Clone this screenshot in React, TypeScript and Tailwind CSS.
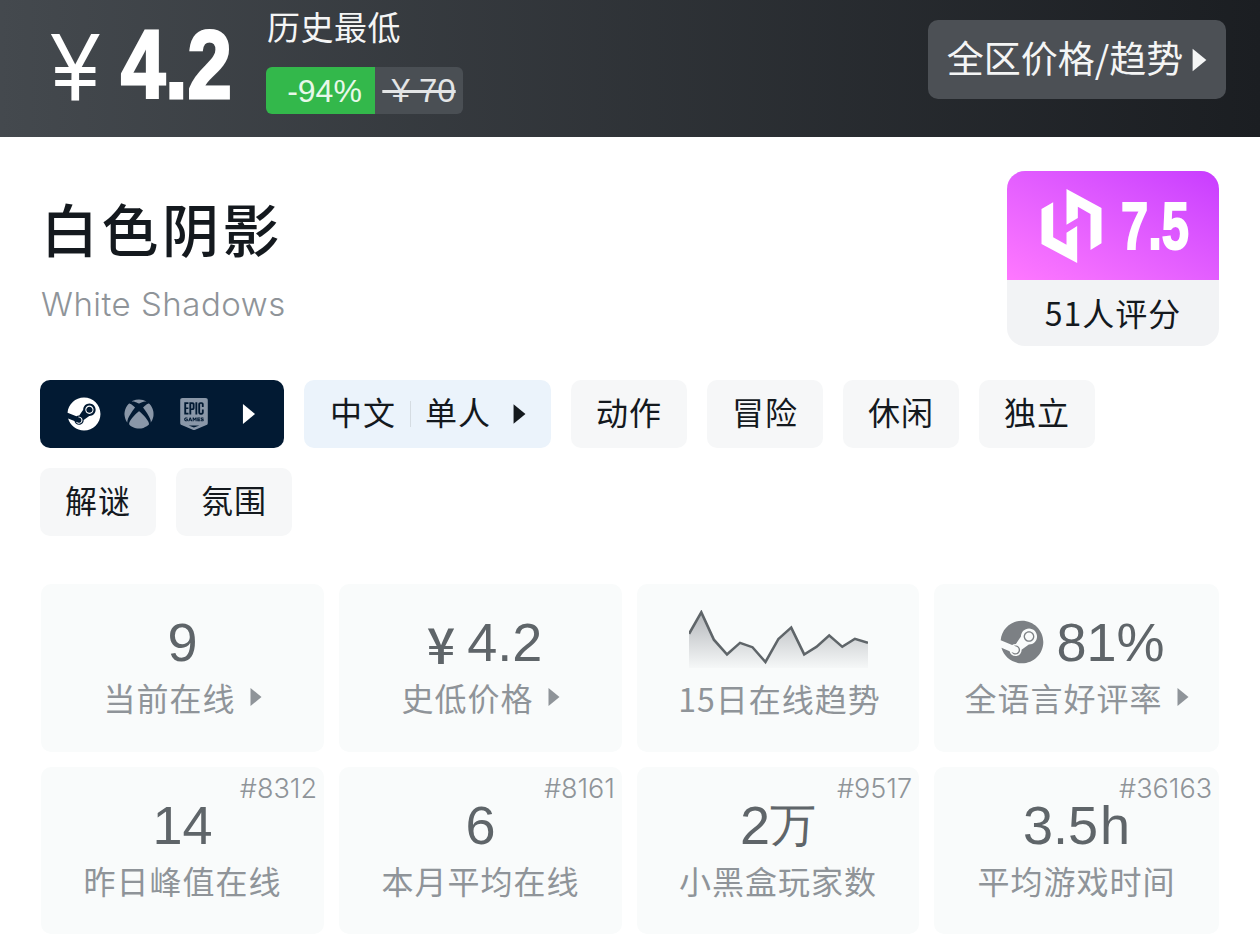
import { FaSteam, FaXbox } from 'react-icons/fa';
import { SiEpicgames } from 'react-icons/si';

const cjk = { fontFamily: '"Noto Sans CJK SC", sans-serif' };
const sparkPoints = '155,162 187,97 220,180 254,224 288,189 320,202 354,247 388,177 421,143 455,224 487,201 520,167 554,201 587,177 621,189';

function Arrow({ className }: { className: string }) {
  return (
    <svg viewBox="0 0 12 20" className={className} fill="currentColor">
      <path d="M0.5 1 L11.5 10 L0.5 19 Z" />
    </svg>
  );
}

function Tag({ text }: { text: string }) {
  return (
    <div className="flex h-[68px] w-[116px] items-center justify-center rounded-[10px] bg-[#f6f7f8] pb-[6px] text-[32px] tracking-[1px] text-[#14191e]">
      {text}
    </div>
  );
}

function StatCard({ value, label, rank, arrow }: { value?: React.ReactNode; label: string; rank?: string; arrow?: boolean }) {
  return (
    <div className="relative rounded-[10px] bg-[#f9fbfb] pt-[30px] text-center">
      {rank && (
        <div className="absolute right-[7px] top-[5px] font-['Inter'] text-[27px] font-light leading-[34px] text-[#8f9499]">{rank}</div>
      )}
      <div className="flex h-[56px] items-center justify-center font-['Liberation_Sans'] text-[54px] leading-[56px] text-[#5f6569]">{value}</div>
      <div className="mt-[7px] flex h-[40px] items-center justify-center text-[32px] leading-[40px] tracking-[1px] text-[#8f9499]">
        {label}
        {arrow && <Arrow className="ml-[14px] h-[22px] w-[12px]" />}
      </div>
    </div>
  );
}

export default function App() {
  return (
    <div className="h-[952px] w-[1260px] overflow-hidden bg-white" style={cjk}>
      {/* Price bar */}
      <div className="flex h-[137px] items-start bg-gradient-to-r from-[#44494e] to-[#1b1e22] pl-[50px] pr-[34px] text-white">
        <div className="flex h-[129px] w-[216px] items-center">
          <span className="ml-[1px] mt-[4px] inline-block w-[54px] origin-left scale-x-[0.9] font-['Liberation_Sans'] text-[97px] leading-none">¥</span>
          <span className="ml-[16px] inline-block origin-left scale-x-[0.83] font-['Liberation_Sans'] text-[96px] font-bold leading-none [-webkit-text-stroke:3px_white]">4.2</span>
        </div>
        <div className="flex flex-col items-start pt-[4px]">
          <div className="h-[44px] pl-[1px] text-[33px] leading-[44px] tracking-[0.5px] text-[#f4f5f5]">历史最低</div>
          <div className="mt-[19px] flex h-[47px] overflow-hidden rounded-[6px]">
            <div className="flex w-[109px] items-center justify-center bg-[#33b84b] pl-[8px] font-['Liberation_Sans'] text-[32px] text-[#e8f8ea]">-94%</div>
            <div className="flex w-[88px] items-center justify-center bg-[#4a4f54] font-['Liberation_Sans'] text-[33px] text-[#e3e5e6] line-through">&nbsp;¥ 70</div>
          </div>
        </div>
        <div className="ml-auto mt-[20px] flex h-[79px] w-[298px] items-center justify-center rounded-[10px] bg-[#4c5055] pb-[4px] text-[37px] text-[#f4f5f5]">
          全区价格/趋势
          <Arrow className="ml-[9px] mt-[4px] h-[28px] w-[15px]" />
        </div>
      </div>

      <div className="pl-[40px] pr-[41px] pt-[34px]">
        {/* Title and score */}
        <div className="flex items-start justify-between">
          <div className="pt-[16px]">
            <div className="pl-[1px] text-[57px] font-medium leading-[80px] tracking-[3.5px] text-[#14191e]">白色阴影</div>
            <div className="mt-[15px] pl-[1px] font-['Inter'] text-[33px] font-light leading-[44px] tracking-[0.5px] text-[#8f9499]">White Shadows</div>
          </div>
          <div className="h-[175px] w-[212px] overflow-hidden rounded-[18px] bg-[#f2f3f5]">
            <div className="flex h-[109px] items-center bg-gradient-to-tr from-[#ff78ff] to-[#c83cff] pl-[34px]">
              <svg viewBox="183 85 180 222" className="h-[74px] w-[61px]" fill="#fff">
                <path d="M258 85 L363 142 L363 248 L330 268 L330 160 L292 138 L292 172 L258 192 Z" />
                <path d="M290 307 L183 250 L183 145 L218 125 L218 230 L258 252 L258 216 L290 196 Z" />
              </svg>
              <span className="ml-[19px] inline-block origin-left scale-x-[0.74] font-['Liberation_Sans'] text-[66px] font-bold leading-none text-white [-webkit-text-stroke:2px_white]">7.5</span>
            </div>
            <div className="flex h-[66px] items-center justify-center pb-[2px] text-[32px] tracking-[1px] text-[#14191e]">51人评分</div>
          </div>
        </div>

        {/* Tags */}
        <div className="mt-[34px] flex flex-wrap gap-[20px]">
          <div className="flex h-[68px] w-[244px] items-center rounded-[10px] bg-[#021a33] pl-[27px]">
            <FaSteam className="h-[34px] w-[34px] text-white" />
            <FaXbox className="ml-[23px] h-[30px] w-[30px] text-[#8a97a8]" />
            <SiEpicgames className="ml-[24px] h-[36px] w-[32px] text-[#8a97a8]" />
            <Arrow className="ml-[32px] h-[22px] w-[14px] text-white" />
          </div>
          <div className="flex h-[68px] w-[247px] items-center rounded-[10px] bg-[#ebf3fb] pb-[6px] pl-[26px] text-[32px] tracking-[1px] text-[#14191e]">
            中文
            <span className="mx-[14px] mt-[6px] h-[26px] w-[1px] bg-[#d5dce2]" />
            单人
            <Arrow className="ml-[22px] mt-[6px] h-[22px] w-[13px]" />
          </div>
          <Tag text="动作" />
          <Tag text="冒险" />
          <Tag text="休闲" />
          <Tag text="独立" />
          <Tag text="解谜" />
          <Tag text="氛围" />
        </div>

        {/* Stats */}
        <div className="ml-[1px] mt-[48px] grid grid-cols-[283px_283px_282px_285px] grid-rows-[168px_167px] gap-[15px]">
          <StatCard value="9" label="当前在线" arrow />
          <StatCard
            value={
              <span className="flex items-center pl-[8px]">
                <span className="mr-[12px] font-['Noto_Sans_CJK_SC'] text-[50px] font-medium leading-[56px]">¥</span>
                4.2
              </span>
            }
            label="史低价格"
            arrow
          />
          <div className="rounded-[10px] bg-[#f9fbfb] pt-[26px] text-center">
            <svg viewBox="155 90 466 175" preserveAspectRatio="none" className="mx-auto h-[58px] w-[179px]">
              <defs>
                <linearGradient id="spark" x1="0" y1="0" x2="0" y2="1">
                  <stop offset="0" stopColor="#b4b7bb" />
                  <stop offset="1" stopColor="#b4b7bb" stopOpacity="0.05" />
                </linearGradient>
              </defs>
              <polygon points={`155,265 ${sparkPoints} 621,265`} fill="url(#spark)" />
              <polyline points={sparkPoints} fill="none" stroke="#5f6569" strokeWidth="7" />
            </svg>
            <div className="mt-[10px] flex h-[40px] items-center justify-center pl-[3px] text-[32px] leading-[40px] tracking-[1px] text-[#8f9499]">15日在线趋势</div>
          </div>
          <StatCard
            value={
              <span className="flex items-center pl-[12px]">
                <FaSteam className="mr-[12px] h-[44px] w-[44px] text-[#7c8084]" />
                81%
              </span>
            }
            label="全语言好评率"
            arrow
          />
          <StatCard value="14" label="昨日峰值在线" rank="#8312" />
          <StatCard value="6" label="本月平均在线" rank="#8161" />
          <StatCard
            value={
              <>
                2<span className="text-[46px]">万</span>
              </>
            }
            label="小黑盒玩家数"
            rank="#9517"
          />
          <StatCard
            value={
              <>
                3.5<span className="ml-[2px]">h</span>
              </>
            }
            label="平均游戏时间"
            rank="#36163"
          />
        </div>
      </div>
    </div>
  );
}
